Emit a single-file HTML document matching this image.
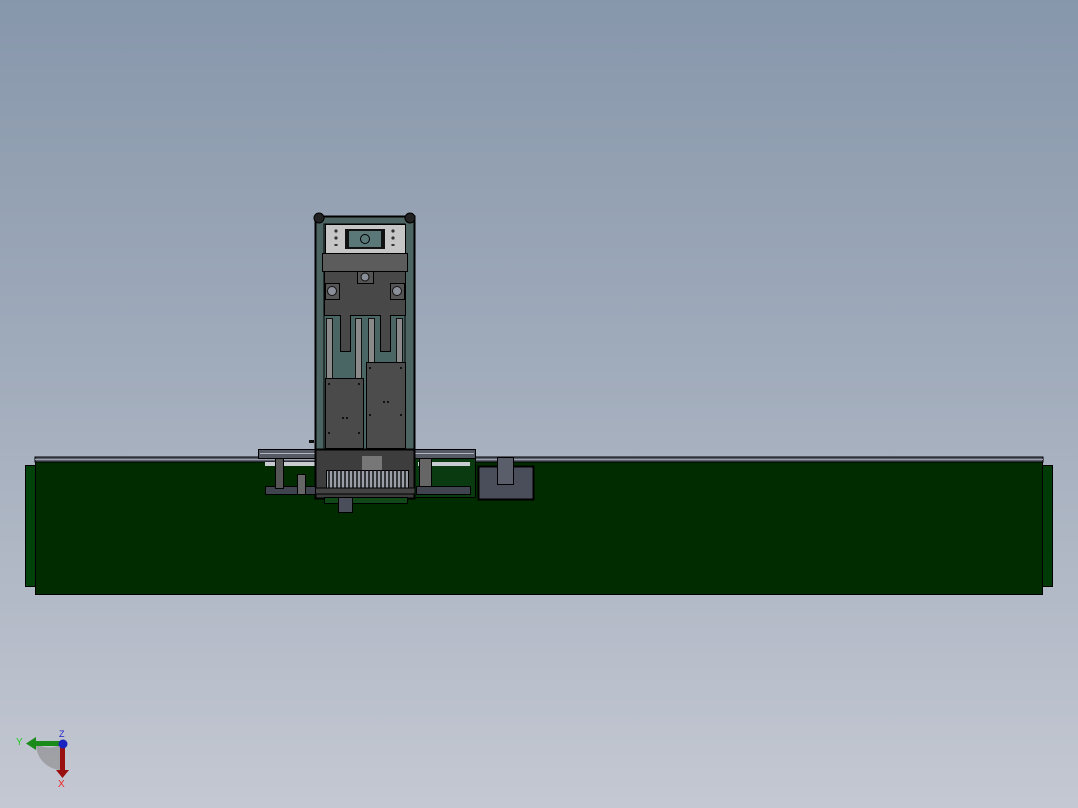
<!DOCTYPE html>
<html><head><meta charset="utf-8"><style>
html,body{margin:0;padding:0}
body{width:1078px;height:808px;overflow:hidden;background:linear-gradient(#8797ab 0%,#a0abbb 45%,#c4c8d2 100%);position:relative;font-family:"Liberation Sans",sans-serif}
</style></head><body>
<svg width="1078" height="808" style="position:absolute;left:0;top:0" xmlns="http://www.w3.org/2000/svg">
<!-- end caps -->
<rect x="25.5" y="465.5" width="12" height="121" fill="#00420a" stroke="#000"/>
<rect x="1040.5" y="465.5" width="12" height="121" fill="#003a06" stroke="#000"/>
<!-- main body -->
<rect x="35.5" y="458.5" width="1007" height="136" fill="#002c00" stroke="#000"/>
<rect x="35" y="457" width="1008" height="5" fill="#5c6070" stroke="#000" stroke-width="1"/>
<line x1="35" y1="459.5" x2="1043" y2="459.5" stroke="#9aa0aa"/>
<!-- tower frame -->
<rect x="315.5" y="216.5" width="99" height="240" fill="#4c6462" stroke="#000" stroke-width="2"/>
<rect x="324" y="224" width="81" height="231" fill="#4a6664" stroke="#000"/>
<!-- top corners -->
<circle cx="319" cy="218" r="5" fill="#222" stroke="#000"/>
<circle cx="410" cy="218" r="5" fill="#222" stroke="#000"/>
<!-- panel -->
<rect x="325.5" y="224.5" width="80" height="29" fill="#c6c6c6" stroke="#000"/>
<rect x="345" y="229" width="40" height="20" fill="#111"/>
<rect x="349" y="231" width="32" height="16" fill="#5a7878"/>
<circle cx="365" cy="239" r="4.5" fill="#5a7878" stroke="#000"/>
<g fill="#333"><circle cx="336" cy="231" r="1.6"/><circle cx="336" cy="238" r="1.6"/><rect x="334.5" y="244" width="3" height="2"/><circle cx="393" cy="231" r="1.6"/><circle cx="393" cy="238" r="1.6"/><rect x="391.5" y="244" width="3" height="2"/></g>
<rect x="322.5" y="253.5" width="85" height="18" fill="#5c5c5c" stroke="#000"/>
<!-- upper block with fingers -->
<path d="M324.5 271.5H405.5V315.5H390.5V351.5H380.5V315.5H350.5V351.5H340.5V315.5H324.5Z" fill="#484848" stroke="#000"/>
<g fill="#555" stroke="#000"><rect x="357.5" y="271.5" width="16" height="12"/><rect x="325.5" y="283.5" width="14" height="16"/><rect x="390.5" y="283.5" width="14" height="16"/></g>
<g fill="#8a8e98" stroke="#111"><circle cx="365" cy="277" r="4"/><circle cx="332" cy="291" r="4.5"/><circle cx="397" cy="291" r="4.5"/></g>
<!-- rails -->
<g fill="#8a8a8a" stroke="#111"><rect x="326.5" y="318.5" width="6" height="60"/><rect x="355.5" y="318.5" width="6" height="60"/><rect x="368.5" y="318.5" width="6" height="44"/><rect x="396.5" y="318.5" width="6" height="44"/></g>
<!-- plates -->
<rect x="325.5" y="378.5" width="38" height="70" fill="#4a4a4a" stroke="#000"/>
<rect x="366.5" y="362.5" width="39" height="86" fill="#4c4c4c" stroke="#000"/>
<g fill="#111"><rect x="328" y="383" width="2" height="2"/><rect x="358" y="383" width="2" height="2"/><rect x="342" y="417" width="2" height="2"/><rect x="346" y="417" width="2" height="2"/><rect x="369" y="367" width="2" height="2"/><rect x="400" y="367" width="2" height="2"/><rect x="383" y="401" width="2" height="2"/><rect x="387" y="401" width="2" height="2"/><rect x="369" y="414" width="2" height="2"/><rect x="400" y="414" width="2" height="2"/><rect x="328" y="432" width="2" height="2"/><rect x="358" y="432" width="2" height="2"/></g>
<rect x="309" y="440" width="5" height="3" fill="#111"/>
<!-- lower assembly -->
<rect x="414.5" y="449.5" width="61" height="48" fill="#093a10" stroke="#000"/>
<rect x="258.5" y="449.5" width="217" height="9" fill="#555a64" stroke="#000"/>
<line x1="260" y1="453.5" x2="474" y2="453.5" stroke="#b0b4bc"/>
<rect x="265" y="462" width="50" height="4" fill="#c8ccd0"/>
<rect x="418" y="462" width="52" height="4" fill="#c8ccd0"/>
<rect x="315.5" y="449.5" width="99" height="49" fill="#3d3d3d" stroke="#000" stroke-width="2"/>
<rect x="326.5" y="470.5" width="82" height="18" fill="#9a9ea8" stroke="#000"/>
<g stroke="#111" stroke-width="1.5"><path d="M329 470v18M333 470v18M337 470v18M341 470v18M345 470v18M349 470v18M353 470v18M357 470v18M361 470v18M365 470v18M369 470v18M373 470v18M377 470v18M381 470v18M385 470v18M389 470v18M393 470v18M397 470v18M401 470v18M405 470v18"/></g>
<rect x="315" y="488" width="100" height="6" fill="#444" stroke="#000"/>
<rect x="324.5" y="497.5" width="83" height="6" fill="#114a18" stroke="#000"/>
<rect x="338.5" y="497.5" width="14" height="15" fill="#4a4e5a" stroke="#000"/>
<rect x="265.5" y="486.5" width="50" height="8" fill="#40444e" stroke="#000"/>
<rect x="416.5" y="486.5" width="54" height="8" fill="#40444e" stroke="#000"/>
<rect x="275.5" y="458.5" width="8" height="30" fill="#555" stroke="#000"/>
<rect x="297.5" y="474.5" width="8" height="20" fill="#666" stroke="#000"/>
<rect x="419.5" y="458.5" width="12" height="28" fill="#666" stroke="#000"/>
<rect x="362" y="456" width="20" height="14" fill="#777"/>
<!-- right block -->
<rect x="478.5" y="466.5" width="55" height="33" fill="#4a4e5a" stroke="#000" stroke-width="2"/>
<rect x="497.5" y="457.5" width="16" height="27" fill="#5a5e6a" stroke="#000"/>
</svg>
<!-- triad -->
<svg width="80" height="80" style="position:absolute;left:10px;top:720px" xmlns="http://www.w3.org/2000/svg">
<path d="M52 24 A26 26 0 0 1 26 24 A26 26 0 0 0 52 50Z" fill="#888" opacity="0.6"/>
<rect x="24" y="21" width="28" height="5" fill="#1a8a1a"/>
<path d="M16 23.5 L26 17 L26 30Z" fill="#1a8a1a"/>
<rect x="50" y="24" width="5" height="28" fill="#9a1010"/>
<path d="M46 50 L59 50 L52.5 58Z" fill="#9a1010"/>
<circle cx="53" cy="24" r="4.5" fill="#1a22c0"/>
<text x="6" y="25" font-size="10" fill="#2c2">Y</text>
<text x="49" y="17" font-size="9" fill="#22c">Z</text>
<text x="48" y="67" font-size="10" fill="#e22">X</text>
</svg>
</body></html>
